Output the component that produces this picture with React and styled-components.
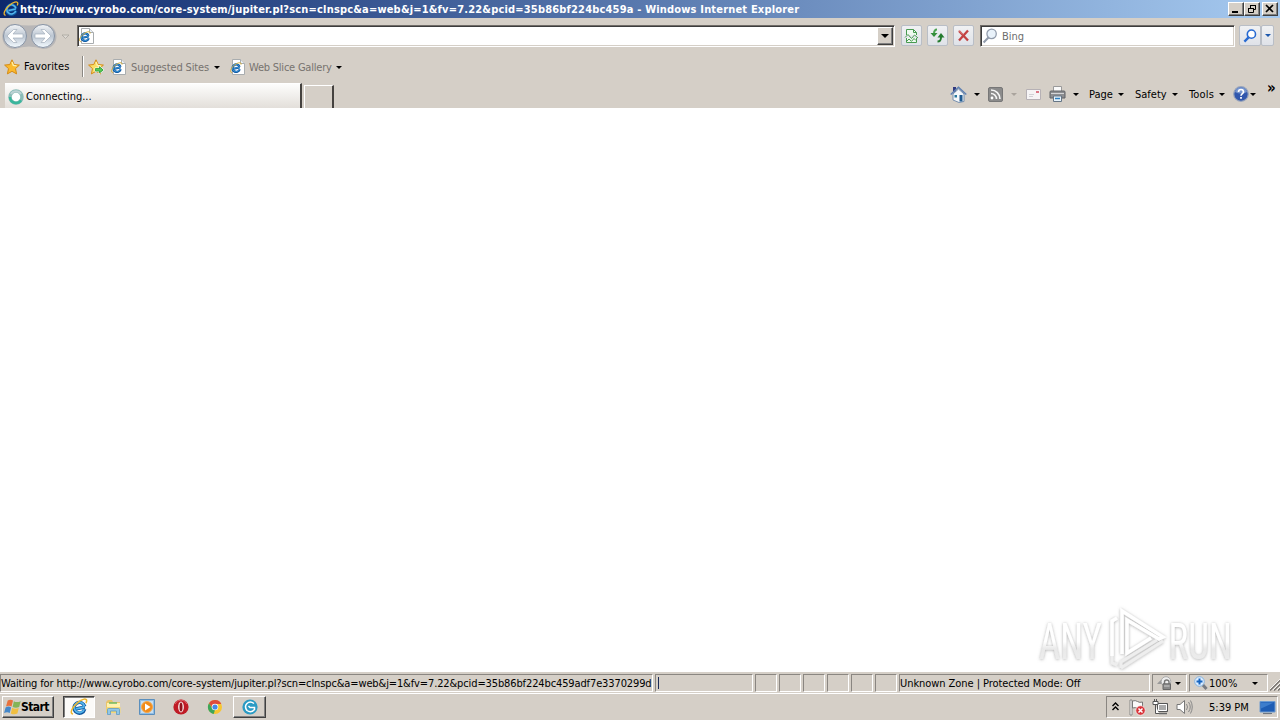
import React from 'react'
import styled, { createGlobalStyle, css } from 'styled-components';

const GlobalStyle = createGlobalStyle`
    * {
        box-sizing: border-box;
    }

    body {
        margin: 0;
        overflow: hidden;
        background: #fff;
    }

    svg {
        display: block;
        flex: none;
    }
`

const raised = css`
    border: 1px solid;
    border-color: #fff #404040 #404040 #fff;
    box-shadow: inset -1px -1px 0 #808080;
`

const Window = styled.div`
    display: flex;
    flex-direction: column;
    width: 1280px;
    height: 720px;
    background: #d5cfc7;
    color: #000;
    font-family: 'DejaVu Sans Condensed', 'DejaVu Sans', sans-serif;
    font-stretch: condensed;
    font-size: 11px;
    line-height: 14px;
`

const TitleBar = styled.header`
    display: flex;
    align-items: center;
    height: 18px;
    padding: 0 2px 0 3px;
    background: linear-gradient(to right, #0c286c, #a6caf0);
`

const Label = styled.span`
    flex: none;
    width: ${({ $w }) => $w}px;
    margin-top: ${({ $mt }) => $mt || 0}px;
    margin-left: ${({ $ml }) => $ml || 0}px;
    color: ${({ $color }) => $color || 'inherit'};
    font-weight: ${({ $bold }) => ($bold ? 'bold' : 'normal')};
    letter-spacing: ${({ $ls }) => $ls || 0}px;
    white-space: nowrap;
`

const WindowButtons = styled.div`
    display: flex;
    margin-left: auto;
`

const WindowButton = styled.button`
    ${raised}
    display: flex;
    align-items: center;
    justify-content: center;
    width: 16px;
    height: 14px;
    margin-left: ${({ $ml }) => $ml || 0}px;
    padding: 0;
    background: #d5cfc7;
`

const NavBar = styled.nav`
    display: flex;
    align-items: flex-start;
    height: 36px;
    padding: 7px 6px 0 2px;
`

const Travel = styled.div`
    display: flex;
    align-items: center;
    width: 75px;
    height: 22px;
`

const Field = styled.div`
    display: flex;
    align-items: center;
    width: ${({ $w }) => $w}px;
    height: 22px;
    margin-left: ${({ $ml }) => $ml || 0}px;
    padding-left: 1px;
    border: 1px solid;
    border-color: #6f6b67 #fff #fff #6f6b67;
    box-shadow: inset 1px 1px 0 #3c3c3c, inset -1px -1px 0 #d5cfc7;
    background: #fff;
`

const DropButton = styled.button`
    ${raised}
    display: flex;
    align-items: center;
    justify-content: center;
    width: 16px;
    height: 18px;
    margin: 0 1px 0 auto;
    padding: 0;
    background: #d5cfc7;
`

const ToolButton = styled.button`
    display: flex;
    align-items: center;
    justify-content: center;
    width: ${({ $w }) => $w || 21}px;
    height: 21px;
    margin-left: ${({ $ml }) => $ml || 0}px;
    padding: 0;
    border: 1px solid #b9bec6;
    border-radius: 2px;
    background: linear-gradient(#f0f1f3, #dfe2e8);
`

const FavoritesBar = styled.div`
    display: flex;
    align-items: center;
    height: 26px;
    padding-left: 4px;
`

const Divider = styled.div`
    width: 2px;
    height: 21px;
    margin: -2px 4px 0 9px;
    border-left: 1px solid #8a8782;
    border-right: 1px solid #fff;
`

const Caret = styled.i`
    flex: none;
    width: 0;
    height: 0;
    margin-left: ${({ $ml }) => $ml || 0}px;
    border: 3px solid transparent;
    border-top-color: ${({ $color }) => $color || '#000'};
    border-bottom: 0;
`

const TabRow = styled.div`
    display: flex;
    height: 28px;
    padding: 3px 0 0 5px;
`

const Tab = styled.div`
    display: flex;
    align-items: center;
    width: 297px;
    height: 25px;
    padding: 1px 0 0 3px;
    border-top: 1px solid #fff;
    border-right: 2px solid #45423f;
    background: linear-gradient(#fdfdfc, #e3dfda);
`

const NewTab = styled.div`
    width: 30px;
    height: 23px;
    margin: 2px 0 0 2px;
    border: 1px solid #fff;
    border-right: 2px solid #45423f;
    border-bottom: 0;
`

const CommandBar = styled.div`
    display: flex;
    align-items: center;
    width: 330px;
    height: 22px;
    margin-left: auto;
`

const More = styled.span`
    align-self: flex-start;
    margin: -4px 0 0 11px;
    font-size: 15px;
    line-height: 18px;
    font-weight: bold;
`

const Page = styled.main`
    display: flex;
    align-items: flex-end;
    justify-content: flex-end;
    height: 564px;
    padding-right: 38px;
    background: #fff;
`

const StatusBar = styled.footer`
    display: flex;
    align-items: flex-start;
    gap: 2px;
    height: 22px;
    padding-top: 2px;
    border-bottom: 1px solid #fff;
`

const Pane = styled.div`
    display: flex;
    flex: none;
    align-items: center;
    width: ${({ $w }) => $w}px;
    height: 18px;
    padding-left: ${({ $pl }) => $pl || 0}px;
    border: 1px solid;
    border-color: #8a8681 #fff #fff #8a8681;
`

const Progress = styled.i`
    width: 1px;
    height: 12px;
    background: #1b2b55;
`

const TaskBar = styled.footer`
    display: flex;
    align-items: flex-start;
    height: 26px;
    padding: 2px 2px 0;
`

const StartButton = styled.button`
    ${raised}
    display: flex;
    align-items: center;
    width: 52px;
    height: 22px;
    padding: 0 0 0 1px;
    background: #d5cfc7;
    color: #000;
    font: bold 12px 'DejaVu Sans Condensed', sans-serif;
    letter-spacing: -0.6px;
`

const TaskItem = styled.div`
    display: flex;
    align-items: center;
    justify-content: center;
    width: ${({ $w }) => $w || 34}px;
    height: 22px;
    margin-left: ${({ $ml }) => $ml || 0}px;
    ${({ $open }) => $open && raised}
    ${({ $active }) => $active && css`
        border: 1px solid;
        border-color: #404040 #fff #fff #404040;
        box-shadow: inset 1px 1px 0 #808080;
        background: #fbfaf8;
    `}
`

const Tray = styled.div`
    display: flex;
    align-items: center;
    width: 172px;
    height: 22px;
    margin-left: auto;
    padding-left: 5px;
    border: 1px solid;
    border-color: #8a8681 #fff #fff #8a8681;
`

const Spaced = styled.span`
    flex: none;
    margin-left: ${({ $ml }) => $ml || 0}px;
`

const IeLogo = ({ size = 16 }) => (
    <svg width={size} height={size} viewBox="0 0 16 16">
        <g transform="rotate(-12 8 8)">
            <path d="M13.100 9.100H5.200M12.600 10.900A4.800 4.800 0 1 1 13.100 8.600" fill="none" stroke="#0f579f" strokeWidth="3" />
            <path d="M12.700 9H5.200M12.200 10.900A4.600 4.600 0 1 1 12.900 8.400" fill="none" stroke="#54b5ec" strokeWidth="1.600" />
        </g>
        <path d="M2.700 14.200C-.8 14 2 8 6.500 4.300 10 1.200 14.400-.1 14.800 2c.1.8-.2 1.700-.6 2.500" fill="none" stroke="#edb62d" strokeWidth="1.300" />
    </svg>
)

const IePage = () => (
    <svg width="16" height="16" viewBox="0 0 16 16">
        <path d="M2.500.5h8l4 4v11h-12z" fill="#fff" stroke="#a9adaf" />
        <path d="M10.500.5v4h4" fill="#e8eef4" stroke="#a9adaf" />
        <g transform="rotate(-12 6 9)">
            <path d="M9.800 9.200H3.500M9.400 11A3.700 3.700 0 1 1 9.800 8.600" fill="none" stroke="#135ba4" strokeWidth="2.200" />
            <path d="M9.500 9H3.500M9.200 10.800A3.600 3.600 0 1 1 9.600 8.400" fill="none" stroke="#3f9cdc" strokeWidth=".8" />
        </g>
        <path d="M2 13.600C-1 13.300 1 8.600 4.800 5.800c3.200-2.500 7-3 6.200-.2" fill="none" stroke="#d9b13c" strokeWidth="1" />
    </svg>
)

const TravelButtons = () => (
    <svg width="72" height="27" viewBox="0 0 72 27">
        <defs>
            <linearGradient id="orb" x2="0" y2="1">
                <stop offset="0" stopColor="#f3f5f7" />
                <stop offset=".5" stopColor="#bcc6d2" />
                <stop offset="1" stopColor="#f4fbff" />
            </linearGradient>
        </defs>
        <path d="M13 1q14 3 28 0c18 0 18 25 0 25q-14-5-28 0c-17 0-17-25 0-25" fill="#b7b6b7" />
        <circle cx="13" cy="13" r="11.500" fill="url(#orb)" stroke="#8793a4" />
        <circle cx="41" cy="13" r="11.500" fill="url(#orb)" stroke="#8793a4" />
        <path d="M5 13l6.500-6.500h3.500l-4 4.500H21v4H11l4 4.500h-3.500zM49 13L42.500 6.500H39l4 4.500H33v4h10l-4 4.500h3.500z" fill="#fff" stroke="#a4afbc" strokeWidth=".7" />
        <path d="M60 12h7l-3.500 3.500z" fill="#dedad4" stroke="#aaa69f" strokeWidth=".8" />
    </svg>
)

const Star = ({ add }) => (
    <svg width="17" height="16" viewBox="0 0 17 16">
        <path d="M8 .8l2.200 4.700 5.200.6-3.900 3.500 1.100 5.300L8 12.300l-4.600 2.600 1.100-5.300L.600 6.100l5.200-.6z" fill={add ? '#f9df68' : '#fbb92c'} stroke="#d48b16" />
        <path d="M8 3l1.300 3.300 3.300.5" fill="none" stroke="#fff1a8" strokeWidth="1.300" />
        {add && <path d="M7 9h4V6.500l5 4.500-5 4v-2.500H7z" fill="#56c954" stroke="#fff" strokeWidth=".8" />}
        {add && <path d="M7.500 9.500h4V7.800l3.600 3.200-3.600 3v-1.900h-4z" fill="none" stroke="#259331" strokeWidth=".7" />}
    </svg>
)

const Compat = () => (
    <svg width="15" height="16" viewBox="0 0 15 16">
        <path d="M2.500 7V1.500h7l3 3V7M2.500 10v4.500h10V10" fill="#eefaef" stroke="#489b50" />
        <path d="M9.500 1.500v3h3M1 9.500l3-3 3.500 4 3-3.500 3.500 3M3 13l2-2 2.500 2.300L10 10.500l2 2" fill="none" stroke="#489b50" />
    </svg>
)

const Refresh = () => (
    <svg width="15" height="15" viewBox="0 0 15 15">
        <path d="M7 1.500C4.500 1.500 4 3 4 6" fill="none" stroke="#4ca452" strokeWidth="2" />
        <path d="M.500 5h7L4 9z" fill="#338e3a" />
        <path d="M7.500 13.500c3 0 3.500-1.500 3.500-4.500" fill="none" stroke="#247b2e" strokeWidth="2" />
        <path d="M7.500 9.500h7L11 5z" fill="#247b2e" />
    </svg>
)

const Stop = () => (
    <svg width="13" height="13" viewBox="0 0 13 13">
        <path d="M2 2l9 9.500M11 1.500L2 11.500" stroke="#c34242" strokeWidth="2.300" />
        <path d="M2 1.500l4 4" stroke="#e18a88" strokeWidth="1" />
    </svg>
)

const Magnifier = ({ color = '#276ad2', glass = '#fff', size = 15, rim = 1.7 }) => (
    <svg width={size} height={size} viewBox="0 0 15 15">
        <path d="M1.500 13.500l5-5" stroke={color} strokeWidth={rim + 0.8} />
        <circle cx="9" cy="5.500" r="4.400" fill={glass} stroke={color} strokeWidth={rim} />
    </svg>
)

const Spinner = () => (
    <svg width="16" height="16" viewBox="0 0 16 16">
        <circle cx="8" cy="8" r="6" fill="#fff" stroke="#8bbcb7" strokeWidth="3.500" />
        <path d="M2 8a6 6 0 0 0 11 3.300" fill="none" stroke="#39b69c" strokeWidth="2.500" />
        <path d="M3 5a6 6 0 0 1 10 0" fill="none" stroke="#bed2d5" strokeWidth="2" />
    </svg>
)

const Home = () => (
    <svg width="17" height="17" viewBox="0 0 17 17">
        <path d="M3 1h3v5H3z" fill="#30397f" />
        <path d="M3 8l5.500-5L14 8v7.500l-5 1L3 14z" fill="#f4f7fa" stroke="#7890ae" />
        <path d="M.700 8.500L8.500 1.300l7.800 7.200" fill="none" stroke="#5f80b2" strokeWidth="1.500" />
        <path d="M9.500 9h3v6.500h-3z" fill="#215b91" />
        <path d="M4.500 9h2.500v2.500H4.500z" fill="#28779d" />
    </svg>
)

const Feed = () => (
    <svg width="15" height="15" viewBox="0 0 15 15">
        <rect x=".500" y=".500" width="14" height="14" rx="1.500" fill="#8b8b8b" stroke="#777" />
        <circle cx="4" cy="11" r="1.400" fill="#fff" />
        <path d="M3 6.500a5.500 5.500 0 0 1 5.500 5.500M3 3a9 9 0 0 1 9 9" fill="none" stroke="#f5f5f5" strokeWidth="1.600" />
    </svg>
)

const Mail = () => (
    <svg width="15" height="11" viewBox="0 0 15 11">
        <path d="M.500.500h14v10H.500z" fill="#f6f4f5" stroke="#b6b1b5" />
        <path d="M10 2h3v2h-3z" fill="#db7685" />
        <path d="M3 5.500h5M3 7.500h4" stroke="#d2d1d5" />
    </svg>
)

const Printer = () => (
    <svg width="17" height="16" viewBox="0 0 17 16">
        <path d="M4.500 6V.500h8V6" fill="#fafafa" stroke="#9a9a9a" />
        <path d="M1 6q0-1 1-1h13q1 0 1 1v6H1z" fill="#8d8e91" stroke="#606266" />
        <path d="M2 7.500h13" stroke="#d4d5d7" />
        <path d="M4.500 10h8v5.500h-8z" fill="#e8f4fc" stroke="#667686" />
        <path d="M6 12.500h5" stroke="#2d7fbf" strokeWidth="1.500" />
    </svg>
)

const Help = () => (
    <svg width="16" height="16" viewBox="0 0 16 16">
        <circle cx="8" cy="8" r="7.300" fill="#3157ad" stroke="#99a5bb" strokeWidth="1.200" />
        <path d="M2 6a6.200 6.200 0 0 1 12 0q-6 3-12 0" fill="#7796cf" />
        <path d="M5.500 6q0-2.500 2.500-2.500T10.500 6C10.500 7.500 8 7.800 8 9.800" fill="none" stroke="#fff" strokeWidth="1.700" />
        <path d="M7.100 11h1.800v1.800H7.100z" fill="#fff" />
    </svg>
)

const PrivacyLock = () => (
    <svg width="17" height="16" viewBox="0 0 17 16">
        <path d="M1 9q4-5 8-6l2 7-6-1z" fill="#999" />
        <circle cx="10" cy="6.500" r="4.800" fill="#eee" stroke="#aaa" />
        <path d="M8.500 9V7q0-2 2.200-2T13 7v2" fill="none" stroke="#777" strokeWidth="1.400" />
        <path d="M7 8.800h7.500v5.700H7z" fill="#8a8a8a" stroke="#686868" />
        <path d="M8 11h5.500" stroke="#ccc" />
    </svg>
)

const ZoomIcon = () => (
    <svg width="14" height="15" viewBox="0 0 14 15">
        <path d="M8.500 8.500l4 4.500" stroke="#777b82" strokeWidth="3" />
        <circle cx="5.500" cy="5.500" r="4.800" fill="#dcedff" stroke="#86b2dd" />
        <path d="M5.500 2.500v6M2.500 5.500h6" stroke="#1564c0" strokeWidth="2" />
    </svg>
)

const Grip = () => (
    <svg width="12" height="17" viewBox="0 0 12 17">
        <path d="M0 16.500L12 4.500M4 16.500l8-8M8 16.500l4-4" stroke="#77736f" strokeWidth="1.500" />
        <path d="M-1 16L12 3M3 16l9-9M7 16l5-5" stroke="#fff" strokeWidth=".8" />
    </svg>
)

const WindowsFlag = () => (
    <svg width="17" height="17" viewBox="0 0 16 16">
        <path d="M3.500 1.500q2.500-1.500 5 0L7.100 7Q4.600 5.500 1.900 7.100z" fill="#e8713c" />
        <path d="M9.300 2q2.500 1.700 6.400 0l-1.400 5.500q-3 1.500-6.200 0z" fill="#84b457" />
        <path d="M1.500 8q2.700-1.600 5.200-.1l-1.300 5.300Q3 11.800.100 13.200z" fill="#4487c9" />
        <path d="M7.700 8.300q2.900 1.600 6.200.2l-1.300 5.200q-3.200 1.500-6.200-.1z" fill="#f1bf41" />
    </svg>
)

const Explorer = () => (
    <svg width="17" height="17" viewBox="0 0 17 17">
        <path d="M1 3l2-2h4l1 2h7v11H1z" fill="#e9c46b" />
        <path d="M2 4h13v5H2z" fill="#fff2ae" />
        <path d="M4 4h8" stroke="#71ba62" strokeWidth="1.500" />
        <path d="M1.500 8h14v6h-14z" fill="#f4d977" />
        <path d="M2.500 15.500v-5q0-1 1-1h10q1 0 1 1v5h-3V12H5.500v3.500z" fill="#91c7e7" stroke="#609bc4" strokeWidth=".8" />
    </svg>
)

const MediaPlayer = () => (
    <svg width="17" height="17" viewBox="0 0 17 17">
        <path d="M.500.500h15v15H.500z" fill="#91bee5" stroke="#5b8fbd" />
        <path d="M2 2h12v12H2z" fill="#c7def0" />
        <circle cx="8" cy="8" r="5.500" fill="#f18b19" stroke="#f5a94f" />
        <path d="M6 4.500L11.500 8 6 11.500z" fill="#fff" />
    </svg>
)

const Opera = () => (
    <svg width="16" height="16" viewBox="0 0 16 16">
        <circle cx="8" cy="8" r="7.600" fill="#bf1b25" />
        <path d="M2 5a6.500 6.500 0 0 1 12 0" fill="none" stroke="#dc6468" />
        <ellipse cx="8" cy="8" rx="2.900" ry="5.400" fill="#f9e7e6" />
        <ellipse cx="8" cy="8" rx="1.500" ry="4.600" fill="#91131c" />
    </svg>
)

const Chrome = () => (
    <svg width="16" height="16" viewBox="0 0 16 16">
        <circle cx="8" cy="8" r="7" fill="#f7c631" />
        <path d="M2 4.300A7 7 0 0 1 14.300 5H8L5.400 9.500z" fill="#df4b3c" />
        <path d="M2 4.300L5.400 9.500 8 11l-1.300 4A7 7 0 0 1 2 4.300" fill="#3da65a" />
        <circle cx="8" cy="8" r="3.300" fill="#fff" />
        <circle cx="8" cy="8" r="2.600" fill="#4589e8" />
    </svg>
)

const CyroboLogo = () => (
    <svg width="16" height="16" viewBox="0 0 16 16">
        <circle cx="8" cy="8" r="7.600" fill="#2a9bc4" />
        <path d="M12 4.500Q8 1.500 5 4.500t0 7q4 3 7.500-1V8.500H8L6.500 7" fill="none" stroke="#fff" strokeWidth="1.500" />
    </svg>
)

const ActionCenter = () => (
    <svg width="17" height="17" viewBox="0 0 17 17">
        <path d="M1 1h2v15H1z" fill="#fff" stroke="#777" strokeWidth=".8" />
        <path d="M3.500 2q3-1 5 .500t5 .500v7q-3 1-5-.500t-5-.500z" fill="#f9f9f9" stroke="#777" />
        <circle cx="11.500" cy="11.500" r="4.700" fill="#d8343a" stroke="#fff" strokeWidth=".6" />
        <path d="M9.500 9.500l4 4M13.500 9.500l-4 4" stroke="#fff" strokeWidth="1.500" />
    </svg>
)

const Network = () => (
    <svg width="17" height="17" viewBox="0 0 17 17">
        <path d="M5.500 4.500h10v8h-10z" fill="#aaa" stroke="#555" />
        <path d="M6.500 5.500h8v6h-8z" fill="none" stroke="#fff" />
        <path d="M7 14.500h8" stroke="#666" strokeWidth="1.500" />
        <path d="M1 2.500h5v3H1zM2.500 0v2M4.500 0v2M3.500 6v8.500H7" fill="#fff" stroke="#555" />
    </svg>
)

const Speaker = () => (
    <svg width="17" height="16" viewBox="0 0 17 16">
        <path d="M1 5.500h3L8.500 1.500v13L4 10.500H1z" fill="#fff" stroke="#777" />
        <path d="M10.500 5q2 3 0 6M12.500 3q3.500 5 0 10M14.500 1.500q3.500 6.500 0 13" fill="none" stroke="#888" />
    </svg>
)

const Desktop = () => (
    <svg width="17" height="15" viewBox="0 0 17 15">
        <path d="M1 1.500h15v10.500H1z" fill="#1e5db4" stroke="#6d9bd0" />
        <path d="M2 2.500h13L2 8.500z" fill="#3d7dcc" />
        <path d="M4 13.500h9" stroke="#707780" strokeWidth="1.200" />
    </svg>
)

// Embossed mark in the lower right corner of the page
const Watermark = () => (
    <svg width="208" height="68" viewBox="0 -2 208 68">
        <defs>
            <filter id="emboss" x="-10%" y="-10%" width="120%" height="125%">
                <feDropShadow dx="0" dy="0.500" stdDeviation="1.500" floodColor="#777" floodOpacity=".6" />
            </filter>
            <linearGradient id="fade" x2="0" y2="1">
                <stop offset=".5" stopColor="#fff" />
                <stop offset=".62" stopColor="#e9e9e9" />
                <stop offset="1" stopColor="#f0f0f0" />
            </linearGradient>
        </defs>
        <g filter="url(#emboss)" fill="url(#fade)" fontFamily="Roboto" fontSize="50">
            <text transform="translate(5 53) scale(.735 1)">ANY</text>
            <text transform="translate(134.500 53) scale(.74 1)">RUN</text>
            <path d="M82 13l-4 2v42l5 2M87 62l42-27M87 62v-6l36-22" fill="none" stroke="#eee" strokeWidth="3" />
            <path d="M78 50V15l5-3" fill="none" stroke="#fff" strokeWidth="3.500" />
            <path d="M88 48V5l41 26-4 2-32-19v33l24-15" fill="none" stroke="#fff" strokeWidth="3.500" />
        </g>
    </svg>
)

const App = () => {
    return (
        <Window>
            <GlobalStyle />
            <TitleBar>
                <IeLogo />
                <Label $w={800} $mt={1} $ml={1} $ls={0.18} $color="#fff" $bold>
                    http://www.cyrobo.com/core-system/jupiter.pl?scn=clnspc&amp;a=web&amp;j=1&amp;fv=7.22&amp;pcid=35b86bf224bc459a - Windows Internet Explorer
                </Label>
                <WindowButtons>
                    <WindowButton>
                        <svg width="12" height="10" viewBox="0 0 12 10"><path d="M2 7h6v2H2z" /></svg>
                    </WindowButton>
                    <WindowButton>
                        <svg width="12" height="10" viewBox="0 0 12 10">
                            <path d="M4.500 4V1.500h5v4H8M4 1.500h6M2.500 4.500h5v4h-5zM2 4.500h6" fill="none" stroke="#000" />
                        </svg>
                    </WindowButton>
                    <WindowButton $ml={2}>
                        <svg width="12" height="10" viewBox="0 0 12 10"><path d="M2 1l7 7M9 1L2 8" stroke="#000" strokeWidth="1.700" /></svg>
                    </WindowButton>
                </WindowButtons>
            </TitleBar>
            <NavBar>
                <Travel><TravelButtons /></Travel>
                <Field $w={818}>
                    <IePage />
                    <DropButton>
                        <svg width="8" height="4" viewBox="0 0 8 4"><path d="M0 0h8L4 4z" /></svg>
                    </DropButton>
                </Field>
                <ToolButton $ml={6}><Compat /></ToolButton>
                <ToolButton $ml={5}><Refresh /></ToolButton>
                <ToolButton $ml={5}><Stop /></ToolButton>
                <Field $w={255} $ml={6}>
                    <Magnifier color="#929cac" glass="#e9f2fa" size={16} rim={1.2} />
                    <Label $w={30} $mt={1} $ml={4} $color="#6d6d6d">Bing</Label>
                </Field>
                <ToolButton $w={22} $ml={4}><Magnifier size={14} /></ToolButton>
                <ToolButton $w={13}><Caret $color="#1c58ad" /></ToolButton>
            </NavBar>
            <FavoritesBar>
                <Star />
                <Label $w={49} $ml={3} $ls={0.1}>Favorites</Label>
                <Divider />
                <Star add />
                <Spaced $ml={6}><IePage /></Spaced>
                <Label $w={81} $mt={1} $ml={4} $ls={-0.12} $color="#77736f">Suggested Sites</Label>
                <Caret $ml={2} />
                <Spaced $ml={10}><IePage /></Spaced>
                <Label $w={86} $mt={1} $ml={3} $ls={-0.22} $color="#77736f">Web Slice Gallery</Label>
                <Caret $ml={1} />
            </FavoritesBar>
            <TabRow>
                <Tab>
                    <Spinner />
                    <Label $w={80} $ml={2}>Connecting...</Label>
                </Tab>
                <NewTab />
                <CommandBar>
                    <Home />
                    <Caret $ml={7} />
                    <Spaced $ml={8}><Feed /></Spaced>
                    <Caret $ml={8} $color="#aaa49d" />
                    <Spaced $ml={9}><Mail /></Spaced>
                    <Spaced $ml={8}><Printer /></Spaced>
                    <Caret $ml={7} />
                    <Label $w={27} $mt={2} $ml={10}>Page</Label>
                    <Caret $ml={2} />
                    <Label $w={35} $mt={2} $ml={11}>Safety</Label>
                    <Caret $ml={2} />
                    <Label $w={29} $mt={2} $ml={11} $ls={0.15}>Tools</Label>
                    <Caret $ml={1} />
                    <Spaced $ml={8}><Help /></Spaced>
                    <Caret $ml={1} />
                    <More>»</More>
                </CommandBar>
            </TabRow>
            <Page><Watermark /></Page>
            <StatusBar>
                <Pane $w={653}>
                    <Label $w={650} $mt={2} $ls={-0.12}>
                        Waiting for http://www.cyrobo.com/core-system/jupiter.pl?scn=clnspc&amp;a=web&amp;j=1&amp;fv=7.22&amp;pcid=35b86bf224bc459adf7e3370299d
                    </Label>
                </Pane>
                <Pane $w={98} $pl={2}><Progress /></Pane>
                {[...Array(6)].map((_, i) => (
                    <Pane key={i} $w={22} />
                ))}
                <Pane $w={251}>
                    <Label $w={240} $mt={2} $ls={-0.06}>Unknown Zone | Protected Mode: Off</Label>
                </Pane>
                <Pane $w={35} $pl={3}>
                    <PrivacyLock />
                    <Caret $ml={2} />
                </Pane>
                <Pane $w={79} $pl={4}>
                    <ZoomIcon />
                    <Label $w={40} $mt={2} $ml={1}>100%</Label>
                    <Caret $ml={3} />
                </Pane>
                <Grip />
            </StatusBar>
            <TaskBar>
                <StartButton><WindowsFlag />Start</StartButton>
                <TaskItem $w={32} $ml={9} $active><IeLogo size={18} /></TaskItem>
                <TaskItem $ml={1}><Explorer /></TaskItem>
                <TaskItem><MediaPlayer /></TaskItem>
                <TaskItem><Opera /></TaskItem>
                <TaskItem><Chrome /></TaskItem>
                <TaskItem $w={33} $ml={1} $open><CyroboLogo /></TaskItem>
                <Tray>
                    <svg width="7" height="11" viewBox="0 0 7 11">
                        <path d="M.500 4L3.500 1l3 3M.500 8l3-3 3 3" fill="none" stroke="#000" strokeWidth="1.400" />
                    </svg>
                    <Spaced $ml={10}><ActionCenter /></Spaced>
                    <Spaced $ml={6}><Network /></Spaced>
                    <Spaced $ml={7}><Speaker /></Spaced>
                    <Label $w={42} $mt={1} $ml={16}>5:39 PM</Label>
                    <Spaced $ml={8}><Desktop /></Spaced>
                </Tray>
            </TaskBar>
        </Window>
    )
}

export default App;
